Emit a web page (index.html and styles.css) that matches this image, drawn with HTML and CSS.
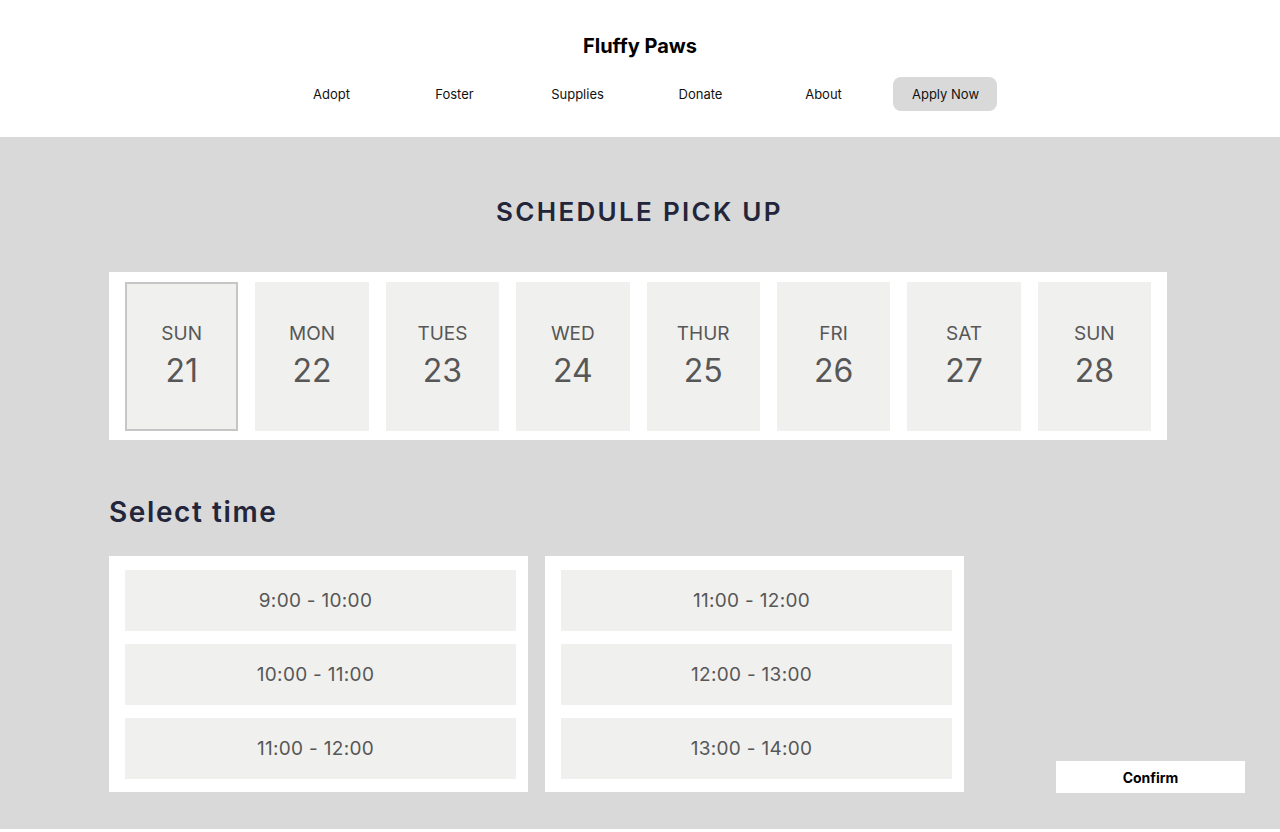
FILE: index.html
```html
<html>

<head>
    <meta charset="utf-8">
    <title>Fluffy Paws - Schedule Pick Up</title>
    <link rel="stylesheet" href="styles.css">
</head>

<body>
    <div class="top">
        <div class="brand">Fluffy Paws</div>
        <div class="nav">
            <a class="nav-item">Adopt</a>
            <a class="nav-item">Foster</a>
            <a class="nav-item">Supplies</a>
            <a class="nav-item">Donate</a>
            <a class="nav-item">About</a>
            <a class="nav-item apply">Apply Now</a>
        </div>
    </div>

    <div class="main">
        <h1 class="title">SCHEDULE PICK UP</h1>

        <div class="days">
            <div class="day selected"><span class="dname">SUN</span><span class="dnum">21</span></div>
            <div class="day"><span class="dname">MON</span><span class="dnum">22</span></div>
            <div class="day"><span class="dname">TUES</span><span class="dnum">23</span></div>
            <div class="day"><span class="dname">WED</span><span class="dnum">24</span></div>
            <div class="day"><span class="dname">THUR</span><span class="dnum">25</span></div>
            <div class="day"><span class="dname">FRI</span><span class="dnum">26</span></div>
            <div class="day"><span class="dname">SAT</span><span class="dnum">27</span></div>
            <div class="day"><span class="dname">SUN</span><span class="dnum">28</span></div>
        </div>

        <h2 class="subtitle">Select time</h2>

        <div class="time-row">
            <div class="slots">
                <div class="slot">9:00 - 10:00</div>
                <div class="slot">10:00 - 11:00</div>
                <div class="slot">11:00 - 12:00</div>
            </div>
            <div class="slots">
                <div class="slot">11:00 - 12:00</div>
                <div class="slot">12:00 - 13:00</div>
                <div class="slot">13:00 - 14:00</div>
            </div>
            <button class="confirm">Confirm</button>
        </div>
    </div>
</body>

</html>
```

FILE: styles.css
```css
body {
    margin: 0;
    font-family: Inter, 'Noto Sans', sans-serif;
    background-color: #ffffff;
}

.top {
    height: 137px;
    box-sizing: border-box;
    padding-top: 33px;
    display: flex;
    flex-direction: column;
    align-items: center;
}

.brand {
    font-size: 20px;
    font-weight: 700;
    color: #000;
    line-height: 26px;
}

.nav {
    display: flex;
    gap: 19px;
    margin-top: 18px;
    margin-left: -6px;
}

.nav-item {
    width: 104px;
    height: 34px;
    line-height: 34px;
    padding-left: 4px;
    box-sizing: border-box;
    text-align: center;
    font-size: 13px;
    color: #111;
    border-radius: 8px;
    cursor: pointer;
}

.apply {
    padding-left: 2px;
    background-color: #d9d9d9;
}

.main {
    background-color: #d9d9d9;
    height: 692px;
    box-sizing: border-box;
    padding: 58px 35px 0 109px;
}

.title {
    margin: 0;
    width: 1058px;
    padding-left: 3px;
    box-sizing: border-box;
    text-align: center;
    font-size: 26px;
    line-height: 34px;
    font-weight: 600;
    letter-spacing: 2.3px;
    color: #23253a;
}

.days {
    margin-top: 43px;
    width: 1058px;
    box-sizing: border-box;
    background-color: #fff;
    padding: 10px 16px 9px 16px;
    display: grid;
    grid-template-columns: repeat(8, 1fr);
    gap: 17px;
}

.day {
    height: 149px;
    box-sizing: border-box;
    padding-top: 2px;
    background-color: #f0f0ee;
    display: flex;
    flex-direction: column;
    align-items: center;
    justify-content: center;
    color: #575757;
    cursor: pointer;
}

.day.selected {
    border: 2px solid #c6c6c6;
}

.dname {
    font-size: 19px;
    line-height: 24px;
}

.dnum {
    font-size: 32px;
    line-height: 40px;
    margin-top: 5px;
    margin-bottom: 2px;
}

.subtitle {
    margin: 55px 0 0 0;
    font-size: 28px;
    line-height: 34px;
    font-weight: 600;
    letter-spacing: 1.6px;
    color: #23253a;
}

.time-row {
    margin-top: 27px;
    display: flex;
    align-items: flex-end;
    gap: 17px;
}

.slots {
    width: 419px;
    box-sizing: border-box;
    background-color: #fff;
    padding: 14px 12px 13px 16px;
    display: flex;
    flex-direction: column;
    gap: 13px;
}

.slot {
    height: 61px;
    line-height: 61px;
    padding-right: 10px;
    background-color: #f0f0ee;
    text-align: center;
    font-size: 19px;
    letter-spacing: 0.3px;
    color: #575757;
    cursor: pointer;
}

.confirm {
    margin-left: auto;
    margin-bottom: -1px;
    width: 189px;
    height: 32px;
    border: 0;
    background-color: #fff;
    font-family: Inter, sans-serif;
    font-size: 14px;
    font-weight: 700;
    color: #000;
    cursor: pointer;
}
```
